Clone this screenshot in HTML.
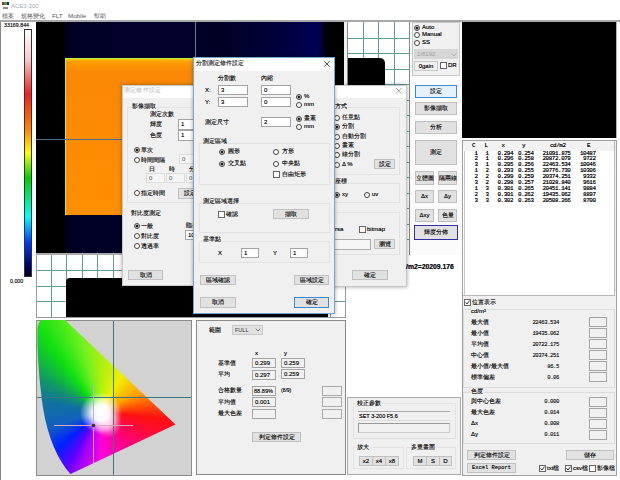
<!DOCTYPE html>
<html><head><meta charset="utf-8">
<style>
*{margin:0;padding:0;box-sizing:border-box}
html,body{width:620px;height:480px;overflow:hidden;background:#fff;font-family:"Liberation Sans",sans-serif;color:#222}
.a{position:absolute}
.t,.btn,.tb,.tbl{text-shadow:0 0 0.4px rgba(0,0,0,.75)}
.t{position:absolute;font-size:6px;line-height:7px;white-space:nowrap;color:#111}
.btn{position:absolute;background:#e1e1e1;border:1px solid #c0c0c0;font-size:6px;line-height:8px;text-align:center;white-space:nowrap;color:#111}
.tb{position:absolute;background:#fff;border:1px solid #a4a4a4;font-size:6px;line-height:7px;padding-left:2px;white-space:nowrap}
.rb{position:absolute;width:6px;height:6px;margin:1px 0 0 0;border:1px solid #444;border-radius:50%;background:#fff}
.rb.on::after{content:"";position:absolute;left:1px;top:1px;width:2px;height:2px;border-radius:50%;background:#222;box-shadow:0 0 0 0.5px #222}
.cb{position:absolute;width:7px;height:7px;border:1px solid #666;background:#fff}
.gb{position:absolute;border:1px solid #e2e2e2}
.dlg{position:absolute;background:#f0f0f0;box-shadow:0 0 4px rgba(0,0,0,.35)}
.mono{font-family:"Liberation Mono",monospace}
.tbl{font-family:"Liberation Mono",monospace;font-size:5.9px;line-height:5.9px;letter-spacing:-0.42px;color:#000;white-space:nowrap}
.gl{background:#f0f0f0;padding-right:1px}

</style></head><body>

<!-- title & menu -->
<div class="a" style="left:2px;top:2px;width:7px;height:7px">
  <div class="a" style="left:0;top:0;width:2px;height:3px;background:#b02818"></div>
  <div class="a" style="left:2px;top:0;width:3px;height:3px;background:#38a838"></div>
  <div class="a" style="left:5px;top:0;width:2px;height:3px;background:#182890"></div>
  <div class="a" style="left:1px;top:5px;width:5px;height:2px;background:#8a6070;opacity:.8"></div>
</div>
<div class="t" style="left:11px;top:2px;font-size:6px;line-height:8px;color:#a4a8b4;text-shadow:none">ACE3-200</div>
<div class="t" style="left:2px;top:12px;font-size:6px;line-height:8px;color:#555;text-shadow:none">檔案</div>
<div class="t" style="left:21px;top:12px;font-size:6px;line-height:8px;color:#555;text-shadow:none">規格變化</div>
<div class="t" style="left:52px;top:12px;font-size:6.2px;line-height:8px;color:#555;text-shadow:none">FLT</div>
<div class="t" style="left:68px;top:12px;font-size:6.2px;line-height:8px;color:#555;text-shadow:none">Mobile</div>
<div class="t" style="left:94px;top:12px;font-size:6px;line-height:8px;color:#555;text-shadow:none">幫助</div>
<div class="a" style="left:0;top:20px;width:620px;height:2px;background:#a8a8a8"></div>

<!-- left colorbar panel -->
<div class="a" style="left:0;top:22px;width:1px;height:458px;background:#888"></div>
<div class="t" style="left:4px;top:22px;font-size:5.3px;color:#222">33169.844</div>
<div class="a" style="left:24px;top:29px;width:8px;height:248px;border:1px solid #333;background:linear-gradient(to bottom,#fff 0%,#f8c8c8 12%,#f02020 26%,#ff8000 40%,#ffff00 50%,#00d000 60%,#00ffff 76%,#0040ff 86%,#000060 96%,#000020 100%)"></div>
<div class="t" style="left:10px;top:278px;font-size:5.3px;color:#222">0.000</div>

<!-- main image -->
<div class="a" style="left:36px;top:22px;width:308px;height:232px;background:#000">
  <div class="a" style="left:29px;top:0;width:260px;height:232px;background:linear-gradient(to right,#000010 0%,#000026 3%,#00002a 45%,#000024 60%,#000040 85%,#000055 97%,#000020 100%)"></div>
  <div class="a" style="left:29px;top:36px;width:158px;height:157px;background:linear-gradient(to bottom,#ffd000 0px,#ffa000 2px,#fa8806 12px,#fd8c02 60%,#ff8f00 100%);border-top:1px solid #b8f040;border-left:1px solid #b8f040"></div>
  <div class="a" style="left:0;top:117px;width:308px;height:1px;background:#4a6f86"></div>
  <div class="a" style="left:159px;top:0;width:1px;height:232px;background:#6a7a8a"></div>
</div>
<div class="a" style="left:36px;top:253px;width:309px;height:2px;background:#aaa"></div>

<!-- lower grid pane -->
<div class="a" style="left:36px;top:255px;width:310px;height:63px;background:#fff;overflow:hidden">
  <svg class="a" style="left:0;top:0" width="309" height="63"><g stroke="#5f9a9c" stroke-width="1"><line x1="15.5" y1="0" x2="15.5" y2="63" /><line x1="30.5" y1="0" x2="30.5" y2="63" /><line x1="46.5" y1="0" x2="46.5" y2="63" /><line x1="61.5" y1="0" x2="61.5" y2="63" /><line x1="77.5" y1="0" x2="77.5" y2="63" /><line x1="92.5" y1="0" x2="92.5" y2="63" /><line x1="108.5" y1="0" x2="108.5" y2="63" /><line x1="123.5" y1="0" x2="123.5" y2="63" /><line x1="139.5" y1="0" x2="139.5" y2="63" /><line x1="154.5" y1="0" x2="154.5" y2="63" /><line x1="170.5" y1="0" x2="170.5" y2="63" /><line x1="185.5" y1="0" x2="185.5" y2="63" /><line x1="201.5" y1="0" x2="201.5" y2="63" /><line x1="216.5" y1="0" x2="216.5" y2="63" /><line x1="232.5" y1="0" x2="232.5" y2="63" /><line x1="247.5" y1="0" x2="247.5" y2="63" /><line x1="263.5" y1="0" x2="263.5" y2="63" /><line x1="278.5" y1="0" x2="278.5" y2="63" /><line x1="294.5" y1="0" x2="294.5" y2="63" /><line x1="0" y1="15.5" x2="309" y2="15.5" /><line x1="0" y1="31.5" x2="309" y2="31.5" /><line x1="0" y1="46.5" x2="309" y2="46.5" /></g></svg>
  <div class="a" style="left:30px;top:23px;width:262px;height:45px;background:#000;border-top-left-radius:4px"></div>
  <div class="a" style="left:0;top:0;width:310px;height:63px;border:1px solid #999;border-top:none"></div>
</div>
<!-- right grid pane -->
<div class="a" style="left:344px;top:22px;width:3px;height:233px;background:#f0f0f0"></div>
<div class="a" style="left:347px;top:22px;width:63px;height:233px;background:#fff;overflow:hidden">
  <svg class="a" style="left:0;top:0" width="63" height="233"><g stroke="#5f9a9c" stroke-width="1"><line x1="16.5" y1="0" x2="16.5" y2="233" /><line x1="31.5" y1="0" x2="31.5" y2="233" /><line x1="47.5" y1="0" x2="47.5" y2="233" /><line x1="0" y1="16.5" x2="63" y2="16.5" /><line x1="0" y1="31.5" x2="63" y2="31.5" /><line x1="0" y1="47.5" x2="63" y2="47.5" /><line x1="0" y1="62.5" x2="63" y2="62.5" /><line x1="0" y1="78.5" x2="63" y2="78.5" /><line x1="0" y1="93.5" x2="63" y2="93.5" /><line x1="0" y1="109.5" x2="63" y2="109.5" /><line x1="0" y1="124.5" x2="63" y2="124.5" /><line x1="0" y1="140.5" x2="63" y2="140.5" /><line x1="0" y1="155.5" x2="63" y2="155.5" /><line x1="0" y1="171.5" x2="63" y2="171.5" /><line x1="0" y1="186.5" x2="63" y2="186.5" /><line x1="0" y1="202.5" x2="63" y2="202.5" /><line x1="0" y1="217.5" x2="63" y2="217.5" /></g></svg>
  <div class="a" style="left:0;top:36px;width:38px;height:200px;background:#000;border-top-right-radius:5px"></div>
  <div class="a" style="left:0;top:0;width:1px;height:233px;background:#888"></div>
  <div class="a" style="left:62px;top:0;width:1px;height:233px;background:#888"></div>
</div>
<!-- button panel -->
<div class="a" style="left:410px;top:22px;width:52px;height:233px;background:#fbfbfb"></div>

<!-- black panel right -->
<div class="a" style="left:462px;top:22px;width:154px;height:116px;background:#000"></div>
<div class="a" style="left:616px;top:22px;width:1px;height:116px;background:#b0b0b0"></div>

<!-- white region center right -->
<div class="a" style="left:347px;top:255px;width:115px;height:142px;background:#fff"></div>


<!-- table panel -->
<div class="a" style="left:462px;top:140px;width:155px;height:336px;background:#f0f0f0;border:1px solid #a0a0a0"></div>
<div class="a" style="left:463px;top:141px;width:152px;height:155px;background:#fff;border-right:1px solid #b8b8b8;border-bottom:1px solid #b8b8b8"></div>
<div class="a" style="left:464px;top:151px;width:1px;height:144px;background:#c8c8c8"></div>

<!-- right bottom panel -->


<!-- CIE panel -->


<!-- middle panel -->
<div class="a" style="left:196px;top:320px;width:150px;height:155px;background:#f0f0f0;border:1px solid #8a8a8a"></div>

<!-- calib panel -->
<div class="a" style="left:347px;top:397px;width:114px;height:78px;background:#f0f0f0;border:1px solid #aaa"></div>


<!-- orange extends behind dialogs: fix width -->
<!-- dialog 1 -->
<div class="dlg" style="left:122px;top:85px;width:90px;height:201px;border:1px solid #c8c8c8">
  <div class="a" style="left:0;top:0;width:88px;height:12px;background:#fff"></div>
</div>
<div class="t" style="left:124px;top:87px;color:#b4b4b4;text-shadow:none;letter-spacing:0.2px">測定條件設定</div>
<div class="gb" style="left:127px;top:107px;width:80px;height:96px;border-color:#e2e2e2"></div>
<div class="t gl" style="left:132px;top:103px">影像擷取</div>
<div class="t" style="left:150px;top:111px">測定次數</div>
<div class="t" style="left:150px;top:121px">輝度</div>
<div class="tb" style="left:178px;top:119px;width:20px;height:11px;line-height:9px">1</div>
<div class="t gl" style="left:150px;top:132px">色度</div>
<div class="tb" style="left:178px;top:130px;width:20px;height:11px;line-height:9px">1</div>
<div class="rb on" style="left:134px;top:146px"></div>
<div class="t" style="left:141px;top:147px">單次</div>
<div class="rb" style="left:134px;top:156px"></div>
<div class="t" style="left:141px;top:157px">時間間隔</div>
<div class="tb" style="left:179px;top:154px;width:20px;height:10px;border-color:#dcdcdc;background:#f5f5f5;color:#b0b0b0;line-height:8px">0</div>
<div class="t" style="left:149px;top:166px">日</div>
<div class="t" style="left:169px;top:166px">時</div>
<div class="t" style="left:189px;top:166px">分</div>
<div class="tb" style="left:146px;top:173px;width:19px;height:10px;border-color:#dcdcdc;background:#f5f5f5;color:#b0b0b0;line-height:8px">0</div>
<div class="tb" style="left:166px;top:173px;width:19px;height:10px;border-color:#dcdcdc;background:#f5f5f5;color:#b0b0b0;line-height:8px">0</div>
<div class="tb" style="left:186px;top:173px;width:19px;height:10px;border-color:#dcdcdc;background:#f5f5f5;color:#b0b0b0;line-height:8px">0</div>
<div class="rb" style="left:134px;top:189px"></div>
<div class="t" style="left:141px;top:190px">指定時間</div>
<div class="btn" style="left:178px;top:188px;width:24px;height:11px;line-height:9px">設定</div>
<div class="t gl" style="left:131px;top:210px">對比度測定</div>
<div class="rb on" style="left:134px;top:222px"></div>
<div class="t" style="left:141px;top:223px">一般</div>
<div class="t" style="left:186px;top:222px">臨界</div>
<div class="tb" style="left:185px;top:230px;width:20px;height:10px;line-height:8px">10</div>
<div class="rb" style="left:134px;top:232px"></div>
<div class="t" style="left:141px;top:233px">對比度</div>
<div class="rb" style="left:134px;top:242px"></div>
<div class="t" style="left:141px;top:243px">透過率</div>
<div class="btn" style="left:128px;top:270px;width:35px;height:10px;line-height:8px">取消</div>

<!-- dialog 3 -->
<div class="dlg" style="left:300px;top:85px;width:107px;height:202px;border:1px solid #c8c8c8">
  <div class="a" style="left:0;top:0;width:105px;height:12px;background:#fff"></div>
</div>
<svg class="a" style="left:395px;top:87px" width="8" height="8"><path d="M1,1 L6.5,6.5 M6.5,1 L1,6.5" stroke="#8a8a8a" stroke-width="0.8"/></svg>
<div class="gb" style="left:320px;top:107px;width:80px;height:68px"></div>
<div class="t gl" style="left:335px;top:103px">方式</div>
<div class="rb" style="left:334px;top:114px"></div><div class="t" style="left:342px;top:114px">任意點</div>
<div class="rb on" style="left:334px;top:123px"></div><div class="t" style="left:342px;top:123px">分割</div>
<div class="rb" style="left:334px;top:133px"></div><div class="t" style="left:342px;top:133px">自動分割</div>
<div class="rb" style="left:334px;top:142px"></div><div class="t" style="left:342px;top:142px">畫素</div>
<div class="rb" style="left:334px;top:151px"></div><div class="t" style="left:342px;top:151px">線分割</div>
<div class="rb" style="left:334px;top:161px"></div><div class="t" style="left:342px;top:161px">Δ %</div>
<div class="btn" style="left:374px;top:159px;width:21px;height:10px;line-height:8px">設定</div>
<div class="gb" style="left:320px;top:183px;width:80px;height:20px"></div>
<div class="t gl" style="left:335px;top:178px">座標</div>
<div class="rb on" style="left:334px;top:191px"></div><div class="t" style="left:342px;top:191px">xy</div>
<div class="rb" style="left:364px;top:191px"></div><div class="t" style="left:372px;top:191px">uv</div>
<div class="gb" style="left:320px;top:212px;width:80px;height:43px"></div>
<div class="t" style="left:335px;top:226px">rsa</div>
<div class="cb" style="left:359px;top:226px"></div><div class="t" style="left:367px;top:226px">bitmap</div>
<div class="tb" style="left:320px;top:239px;width:51px;height:11px;background:#f6f6f6;border-color:#aaa"></div>
<div class="btn" style="left:374px;top:239px;width:21px;height:10px;line-height:8px">瀏覽</div>
<div class="btn" style="left:352px;top:270px;width:36px;height:10px;line-height:8px">確定</div>

<!-- dialog 2 -->
<div class="dlg" style="left:193px;top:57px;width:142px;height:257px;border:1px solid #7aa4cc">
  <div class="a" style="left:0;top:0;width:140px;height:13px;background:#fff"></div>
</div>
<div class="t" style="left:196px;top:60px;color:#333">分割測定條件設定</div>
<svg class="a" style="left:323px;top:60px" width="8" height="8"><path d="M1.2,1.2 L6.6,6.6 M6.6,1.2 L1.2,6.6" stroke="#333" stroke-width="0.9"/></svg>
<div class="t" style="left:218px;top:75px">分割數</div>
<div class="t" style="left:261px;top:75px">內縮</div>
<div class="t" style="left:205px;top:87px">X:</div>
<div class="tb" style="left:218px;top:85px;width:30px;height:10px;line-height:8px">3</div>
<div class="t" style="left:205px;top:99px">Y:</div>
<div class="tb" style="left:218px;top:97px;width:30px;height:10px;line-height:8px">3</div>
<div class="tb" style="left:261px;top:85px;width:30px;height:10px;line-height:8px">0</div>
<div class="tb" style="left:261px;top:97px;width:30px;height:10px;line-height:8px">0</div>
<div class="rb on" style="left:296px;top:93px"></div><div class="t" style="left:304px;top:93px">%</div>
<div class="rb" style="left:296px;top:101px"></div><div class="t" style="left:304px;top:101px">mm</div>
<div class="t" style="left:205px;top:119px">測定尺寸</div>
<div class="tb" style="left:261px;top:117px;width:30px;height:10px;line-height:8px">2</div>
<div class="rb on" style="left:296px;top:115px"></div><div class="t" style="left:304px;top:115px">畫素</div>
<div class="rb" style="left:296px;top:123px"></div><div class="t" style="left:304px;top:123px">mm</div>
<div class="gb" style="left:199px;top:143px;width:131px;height:42px"></div>
<div class="t gl" style="left:203px;top:138px">測定區域</div>
<div class="rb on" style="left:219px;top:148px"></div><div class="t" style="left:228px;top:148px">圓形</div>
<div class="rb" style="left:273px;top:148px"></div><div class="t" style="left:282px;top:148px">方形</div>
<div class="rb on" style="left:219px;top:160px"></div><div class="t" style="left:228px;top:160px">交叉點</div>
<div class="rb" style="left:273px;top:160px"></div><div class="t" style="left:282px;top:160px">中央點</div>
<div class="cb" style="left:273px;top:171px"></div><div class="t" style="left:282px;top:171px">自由矩形</div>
<div class="gb" style="left:199px;top:203px;width:131px;height:30px"></div>
<div class="t gl" style="left:203px;top:198px">測定區域選擇</div>
<div class="cb" style="left:218px;top:211px"></div><div class="t" style="left:226px;top:211px">確認</div>
<div class="btn" style="left:273px;top:209px;width:36px;height:10px;line-height:8px">擷取</div>
<div class="gb" style="left:199px;top:241px;width:131px;height:22px"></div>
<div class="t gl" style="left:203px;top:236px">基準點</div>
<div class="t" style="left:218px;top:250px">X</div>
<div class="tb" style="left:241px;top:248px;width:18px;height:10px;line-height:8px">1</div>
<div class="t" style="left:273px;top:250px">Y</div>
<div class="tb" style="left:290px;top:248px;width:18px;height:10px;line-height:8px">1</div>
<div class="btn" style="left:200px;top:275px;width:36px;height:10px;line-height:8px">區域確認</div>
<div class="btn" style="left:294px;top:275px;width:35px;height:10px;line-height:8px">區域設定</div>
<div class="btn" style="left:200px;top:297px;width:36px;height:11px;line-height:9px">取消</div>
<div class="btn" style="left:294px;top:297px;width:35px;height:11px;line-height:9px;border:1px solid #3a8ad8">確定</div>


<!-- button panel contents -->
<div class="gb" style="left:412px;top:22px;width:48px;height:54px;border-color:#c8c8c8;background:#f0f0f0"></div>
<div class="rb on" style="left:414px;top:24px"></div><div class="t" style="left:422px;top:24px">Auto</div>
<div class="rb" style="left:414px;top:31px"></div><div class="t" style="left:422px;top:31px">Manual</div>
<div class="rb" style="left:414px;top:39px"></div><div class="t" style="left:422px;top:39px">SS</div>
<div class="a" style="left:414px;top:49px;width:44px;height:10px;background:#d6d6d6"></div>
<div class="t" style="left:417px;top:51px;color:#a0a0a0;text-shadow:none">1/8192</div>
<svg class="a" style="left:451px;top:53px" width="6" height="4"><path d="M0.8,0.8 L3,3 L5.2,0.8" fill="none" stroke="#a8a8a8" stroke-width="0.8"/></svg>
<div class="btn" style="left:414px;top:61px;width:24px;height:10px;line-height:8px;background:#f0f0f0;border-color:#c8c8c8">0gain</div>
<div class="cb" style="left:440px;top:62px"></div><div class="t" style="left:448px;top:62px">DR</div>
<div class="btn" style="left:415px;top:85px;width:42px;height:13px;line-height:11px;border:1px solid #3a8ad8;background:#e5f1fb">設定</div>
<div class="btn" style="left:415px;top:102px;width:42px;height:13px;line-height:11px">影像擷取</div>
<div class="btn" style="left:415px;top:121px;width:42px;height:13px;line-height:11px">分析</div>
<div class="btn" style="left:415px;top:140px;width:42px;height:25px;line-height:23px">測定</div>
<div class="btn" style="left:415px;top:171px;width:19px;height:14px;line-height:12px">立體圖</div>
<div class="btn" style="left:438px;top:171px;width:19px;height:14px;line-height:12px">隔兩線</div>
<div class="btn" style="left:415px;top:190px;width:19px;height:13px;line-height:11px">Δx</div>
<div class="btn" style="left:438px;top:190px;width:19px;height:13px;line-height:11px">Δy</div>
<div class="btn" style="left:415px;top:209px;width:19px;height:13px;line-height:11px">Δxy</div>
<div class="btn" style="left:438px;top:209px;width:19px;height:13px;line-height:11px">色量</div>
<div class="btn" style="left:414px;top:225px;width:44px;height:15px;line-height:13px;border:1px solid #3030a0">輝度分佈</div>

<!-- measurement text -->
<div class="t" style="left:406px;top:263px;font-weight:bold;font-size:6.8px;color:#111">/m2=20209.176</div>

<!-- table -->
<div class="a" style="left:463px;top:141px;width:151px;height:10px;background:#f2f2f2"></div>
<div class="a tbl" style="left:472px;top:143px">C</div>
<div class="a tbl" style="left:484.5px;top:143px">L</div>
<div class="a tbl" style="left:501.5px;top:143px">x</div>
<div class="a tbl" style="left:522px;top:143px">y</div>
<div class="a tbl" style="left:550px;top:143px">cd/m2</div>
<div class="a tbl" style="left:587px;top:143px">E</div>
<div class="a tbl" style="left:471.0px;top:150.5px;width:10px;text-align:center">1<br>2<br>3<br>1<br>2<br>3<br>1<br>2<br>3</div><div class="a tbl" style="left:482.0px;top:150.5px;width:10px;text-align:center">1<br>1<br>1<br>2<br>2<br>2<br>3<br>3<br>3</div><div class="a tbl" style="left:497.5px;top:150.5px">0.294<br>0.296<br>0.295<br>0.293<br>0.299<br>0.298<br>0.301<br>0.301<br>0.302</div><div class="a tbl" style="left:518px;top:150.5px">0.254<br>0.258<br>0.256<br>0.255<br>0.259<br>0.257<br>0.265<br>0.262<br>0.263</div><div class="a tbl" style="left:530.5px;top:150.5px;width:40px;text-align:right">21091.875<br>20872.079<br>22463.534<br>20776.730<br>20374.251<br>21028.840<br>20451.141<br>19435.062<br>20508.266</div><div class="a tbl" style="left:565.5px;top:150.5px;width:30px;text-align:right">10487<br>9722<br>10046<br>10306<br>9332<br>9616<br>9884<br>8897<br>8700</div>

<!-- right bottom panel contents -->
<div class="cb" style="left:464px;top:299px"><svg class="a" style="left:0;top:0" width="5" height="5"><path d="M0.6,2.4 L2,4 L4.6,0.6" fill="none" stroke="#222" stroke-width="0.9"/></svg></div><div class="t" style="left:472px;top:299px">位置表示</div>
<div class="gb" style="left:463px;top:309px;width:152px;height:79px;border-color:#dcdcdc"></div>
<div class="t gl" style="left:471px;top:308px">cd/m²</div>
<div class="t" style="left:471px;top:319px">最大值</div><div class="t mono" style="font-size:5.6px;letter-spacing:-0.4px;text-shadow:0 0 0.3px rgba(0,0,0,.5);left:519px;top:319px;width:40px;text-align:right">22463.534</div><div class="tb" style="left:589px;top:317px;width:18px;height:10px;border-color:#a4a4a4;background:#f1f1f1"></div>
<div class="t" style="left:471px;top:330px">最小值</div><div class="t mono" style="font-size:5.6px;letter-spacing:-0.4px;text-shadow:0 0 0.3px rgba(0,0,0,.5);left:519px;top:330px;width:40px;text-align:right">19435.062</div><div class="tb" style="left:589px;top:328px;width:18px;height:10px;border-color:#a4a4a4;background:#f1f1f1"></div>
<div class="t" style="left:471px;top:341px">平均值</div><div class="t mono" style="font-size:5.6px;letter-spacing:-0.4px;text-shadow:0 0 0.3px rgba(0,0,0,.5);left:519px;top:341px;width:40px;text-align:right">20722.175</div><div class="tb" style="left:589px;top:339px;width:18px;height:10px;border-color:#a4a4a4;background:#f1f1f1"></div>
<div class="t" style="left:471px;top:352px">中心值</div><div class="t mono" style="font-size:5.6px;letter-spacing:-0.4px;text-shadow:0 0 0.3px rgba(0,0,0,.5);left:519px;top:352px;width:40px;text-align:right">20374.251</div><div class="tb" style="left:589px;top:350px;width:18px;height:10px;border-color:#a4a4a4;background:#f1f1f1"></div>
<div class="t" style="left:471px;top:363px">最小值/最大值</div><div class="t mono" style="font-size:5.6px;letter-spacing:-0.4px;text-shadow:0 0 0.3px rgba(0,0,0,.5);left:519px;top:363px;width:40px;text-align:right">86.5</div><div class="tb" style="left:589px;top:361px;width:18px;height:10px;border-color:#a4a4a4;background:#f1f1f1"></div>
<div class="t" style="left:471px;top:374px">標準偏差</div><div class="t mono" style="font-size:5.6px;letter-spacing:-0.4px;text-shadow:0 0 0.3px rgba(0,0,0,.5);left:519px;top:374px;width:40px;text-align:right">0.06</div><div class="tb" style="left:589px;top:372px;width:18px;height:10px;border-color:#a4a4a4;background:#f1f1f1"></div>
<div class="gb" style="left:463px;top:392px;width:152px;height:52px;border-color:#dcdcdc"></div>
<div class="t gl" style="left:471px;top:388px">色度</div>
<div class="t" style="left:471px;top:398px">與中心色差</div><div class="t mono" style="font-size:5.6px;letter-spacing:-0.4px;text-shadow:0 0 0.3px rgba(0,0,0,.5);left:519px;top:398px;width:40px;text-align:right">0.000</div><div class="tb" style="left:589px;top:397px;width:18px;height:10px;border-color:#a4a4a4;background:#f1f1f1"></div>
<div class="t" style="left:471px;top:409px">最大色差</div><div class="t mono" style="font-size:5.6px;letter-spacing:-0.4px;text-shadow:0 0 0.3px rgba(0,0,0,.5);left:519px;top:409px;width:40px;text-align:right">0.014</div><div class="tb" style="left:589px;top:408px;width:18px;height:10px;border-color:#a4a4a4;background:#f1f1f1"></div>
<div class="t" style="left:471px;top:420px">Δx</div><div class="t mono" style="font-size:5.6px;letter-spacing:-0.4px;text-shadow:0 0 0.3px rgba(0,0,0,.5);left:519px;top:420px;width:40px;text-align:right">0.008</div><div class="tb" style="left:589px;top:419px;width:18px;height:10px;border-color:#a4a4a4;background:#f1f1f1"></div>
<div class="t" style="left:471px;top:431px">Δy</div><div class="t mono" style="font-size:5.6px;letter-spacing:-0.4px;text-shadow:0 0 0.3px rgba(0,0,0,.5);left:519px;top:431px;width:40px;text-align:right">0.011</div><div class="tb" style="left:589px;top:430px;width:18px;height:10px;border-color:#a4a4a4;background:#f1f1f1"></div>
<div class="btn" style="left:467px;top:450px;width:49px;height:10px;line-height:8px">判定條件設定</div>
<div class="btn" style="left:566px;top:450px;width:48px;height:10px;line-height:8px">儲存</div>
<div class="btn mono" style="left:467px;top:463px;width:49px;height:10px;line-height:8px;font-size:5.4px">Excel Report</div>
<div class="cb" style="left:539px;top:465px"><svg class="a" style="left:0;top:0" width="5" height="5"><path d="M0.6,2.4 L2,4 L4.6,0.6" fill="none" stroke="#222" stroke-width="0.9"/></svg></div><div class="t" style="left:547px;top:465px">txt檔</div>
<div class="cb" style="left:565px;top:465px"><svg class="a" style="left:0;top:0" width="5" height="5"><path d="M0.6,2.4 L2,4 L4.6,0.6" fill="none" stroke="#222" stroke-width="0.9"/></svg></div><div class="t" style="left:573px;top:465px">csv檔</div>
<div class="cb" style="left:589px;top:465px"></div><div class="t" style="left:597px;top:465px">影像檔</div>

<!-- CIE -->
<svg class="a" style="left:36px;top:320px" width="156" height="156">
  <defs>
    <clipPath id="hs"><path d="M5,0 L29,0 L139.5,104.5 L34.5,154 C22,140 12,118 7,88 C3,60 1,30 1.5,12 C1.5,5 3,2 5,0 Z"/></clipPath>
    <radialGradient id="wh" cx="65" cy="93" r="21" gradientUnits="userSpaceOnUse">
      <stop offset="0" stop-color="#fff" stop-opacity="1"/>
      <stop offset="0.4" stop-color="#fff" stop-opacity="0.95"/>
      <stop offset="1" stop-color="#fff" stop-opacity="0"/>
    </radialGradient>
    <radialGradient id="wh2" cx="72" cy="104" r="14" gradientUnits="userSpaceOnUse">
      <stop offset="0" stop-color="#fff" stop-opacity="0.7"/>
      <stop offset="1" stop-color="#fff" stop-opacity="0"/>
    </radialGradient>
  </defs>
  <rect x="0.5" y="0.5" width="155" height="155" fill="#d2d2d2" stroke="#8a8a8a"/>
  <g clip-path="url(#hs)">
    <foreignObject x="0" y="0" width="156" height="156">
      <div style="width:156px;height:156px;background:conic-gradient(from 0deg at 64px 92px,#a8f010 0deg,#f0f000 30deg,#ffa000 65deg,#ff1010 96deg,#ff0090 146deg,#ff00e0 179deg,#a000ff 200deg,#6000ff 210deg,#0020ff 229deg,#1060c0 253deg,#1070a0 280deg,#109070 297deg,#10e010 324deg,#70f020 345deg,#a8f010 360deg)"></div>
    </foreignObject>
    <rect x="0" y="0" width="156" height="156" fill="url(#wh)"/>
    <rect x="0" y="0" width="156" height="156" fill="url(#wh2)"/>
  </g>
  <line x1="77.5" y1="1" x2="77.5" y2="155" stroke="#3a7585" stroke-width="1"/>
  <line x1="1" y1="77.5" x2="155" y2="77.5" stroke="#3a7585" stroke-width="1"/>
  <line x1="57.5" y1="65" x2="57.5" y2="143" stroke="#d8a8c0" stroke-width="1"/>
  <line x1="18" y1="105.5" x2="97" y2="105.5" stroke="#d8a8c0" stroke-width="1"/>
  <circle cx="57.5" cy="105.5" r="1.8" fill="#333"/>
</svg>

<!-- middle panel contents -->
<div class="t" style="left:209px;top:327px">範圍</div>
<div class="a" style="left:232px;top:325px;width:31px;height:10px;background:#e1e1e1;border:1px solid #c8c8c8"></div>
<div class="t" style="left:235px;top:327px;font-size:5.5px;text-shadow:none;color:#333">FULL</div>
<svg class="a" style="left:255px;top:328px" width="6" height="4"><path d="M0.8,0.8 L3,3 L5.2,0.8" fill="none" stroke="#555" stroke-width="0.8"/></svg>
<div class="t" style="left:255px;top:350px">x</div>
<div class="t" style="left:284px;top:350px">y</div>
<div class="t" style="left:218px;top:360px">基準值</div>
<div class="tb" style="left:252px;top:358px;width:24px;height:10px;line-height:8px;border-color:#a4a4a4;background:#f1f1f1">0.299</div>
<div class="tb" style="left:281px;top:358px;width:24px;height:10px;line-height:8px;border-color:#a4a4a4;background:#f1f1f1">0.259</div>
<div class="t" style="left:218px;top:371px">平均</div>
<div class="tb" style="left:252px;top:370px;width:24px;height:10px;line-height:8px;border-color:#a4a4a4;background:#f1f1f1">0.297</div>
<div class="tb" style="left:281px;top:369px;width:24px;height:10px;line-height:8px;border-color:#a4a4a4;background:#f1f1f1">0.259</div>
<div class="t" style="left:218px;top:387px">合格數量</div>
<div class="tb" style="left:252px;top:386px;width:24px;height:10px;line-height:8px;border-color:#a4a4a4;background:#f1f1f1;font-size:5.6px;padding-left:1px">88.89%</div>
<div class="t" style="left:281px;top:387px;font-size:5px">(8/9)</div>
<div class="t" style="left:218px;top:399px">平均值</div>
<div class="tb" style="left:252px;top:397px;width:24px;height:10px;line-height:8px;border-color:#a4a4a4;background:#f1f1f1">0.001</div>
<div class="t" style="left:218px;top:410px">最大色差</div>
<div class="tb" style="left:252px;top:409px;width:24px;height:10px;border-color:#a4a4a4;background:#f1f1f1"></div>
<div class="tb" style="left:322px;top:386px;width:20px;height:10px;border-color:#aaa;background:#f0f0f0"></div>
<div class="tb" style="left:322px;top:397px;width:20px;height:10px;border-color:#aaa;background:#f0f0f0"></div>
<div class="tb" style="left:322px;top:409px;width:20px;height:10px;border-color:#aaa;background:#f0f0f0"></div>
<div class="btn" style="left:252px;top:432px;width:49px;height:10px;line-height:8px">判定條件設定</div>

<!-- calib panel -->
<div class="gb" style="left:353px;top:403px;width:103px;height:36px"></div>
<div class="t gl" style="left:357px;top:400px">校正參數</div>
<div class="a" style="left:358px;top:411px;width:92px;height:10px;border-top:1px solid #aaa;border-bottom:1px solid #ddd"></div>
<div class="t" style="left:359px;top:413px;font-size:5.5px">SET 3-200 F5.6</div>
<div class="a" style="left:358px;top:423px;width:92px;height:10px;border:1px solid #ccc;border-left-color:#999;border-top-color:#999"></div>
<div class="gb" style="left:353px;top:447px;width:51px;height:22px"></div>
<div class="t gl" style="left:357px;top:444px">放大</div>
<div class="btn" style="left:359px;top:456px;width:14px;height:10px;line-height:8px">x2</div>
<div class="btn" style="left:372px;top:456px;width:14px;height:10px;line-height:8px">x4</div>
<div class="btn" style="left:385px;top:456px;width:14px;height:10px;line-height:8px">x8</div>
<div class="gb" style="left:406px;top:447px;width:50px;height:22px"></div>
<div class="t gl" style="left:411px;top:444px">多重畫面</div>
<div class="btn" style="left:413px;top:456px;width:14px;height:10px;line-height:8px">M</div>
<div class="btn" style="left:426px;top:456px;width:14px;height:10px;line-height:8px">S</div>
<div class="btn" style="left:439px;top:456px;width:13px;height:10px;line-height:8px">D</div>

</body></html>
